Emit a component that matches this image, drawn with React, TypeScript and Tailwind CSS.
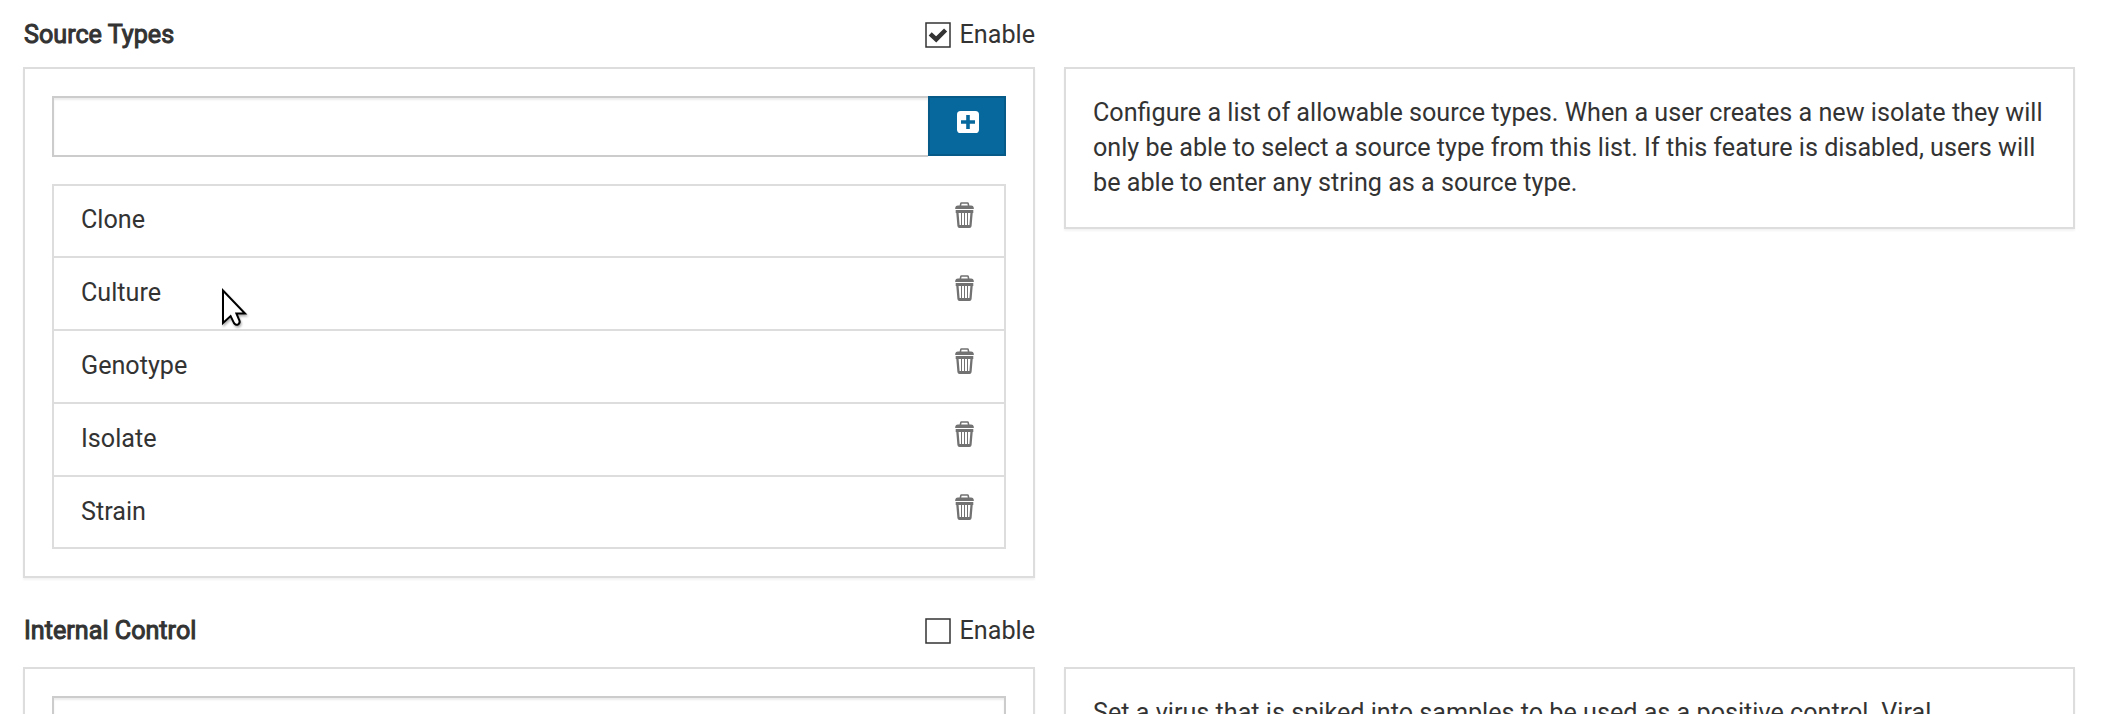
import React from "react";

const sources = [
  { name: "Clone", row: "h-[72px] pt-[16px]" },
  { name: "Culture", row: "h-[73px] pt-[17px]" },
  { name: "Genotype", row: "h-[73px] pt-[17px]" },
  { name: "Isolate", row: "h-[73px] pt-[17px]" },
  { name: "Strain", row: "h-[72px] pt-[17px]" },
];

function TrashIcon() {
  return (
    <svg width="20" height="27" viewBox="0 0 20 27" fill="none">
      <path d="M0.2 7V5.7Q0.5 3.6 2.9 3.5H4.6L5.1 1.3Q5.3 0.2 6.4 0.2H12.6Q13.7 0.2 13.9 1.3L14.4 3.5H16.1Q18.5 3.6 18.8 5.7V7ZM6.2 3.5H12.8L12.4 1.8H6.6Z" fill="#727272" fillRule="evenodd" />
      <path d="M0.7 8H18.3V11H17.7L16.6 24Q16.4 26 14.5 26H4.5Q2.6 26 2.4 24L1.3 11H0.7ZM3.6 11L4.6 23H6V11ZM7 11V23H9V11ZM10 11V23H12V11ZM13 11V23H14.4L15.4 11Z" fill="#727272" fillRule="evenodd" />
    </svg>
  );
}

function PlusIcon() {
  return (
    <svg width="22" height="22" viewBox="0 0 22 22">
      <rect width="22" height="22" rx="3.6" fill="#fff" />
      <path d="M9.2 4h3.6v5.2H18v3.6h-5.2V18H9.2v-5.2H4V9.2h5.2z" fill="#07689d" />
    </svg>
  );
}

function Enable({ checked }: { checked: boolean }) {
  return (
    <div className="flex h-[35px] items-center">
      <svg width="26" height="26" viewBox="0 0 26 26" className="mr-[9px]">
        <rect x="1" y="1" width="24" height="24" fill="#fff" stroke="#333" strokeWidth="1.5" />
        {checked && <path d="M5.2 11.8L11.2 17.4L20.6 8" fill="none" stroke="#333" strokeWidth="4.4" />}
      </svg>
      <span>Enable</span>
    </div>
  );
}

function Header({ title, checked }: { title: string; checked: boolean }) {
  return (
    <div className="flex w-[1012px] justify-between pl-px">
      <h2 className="h-[35px] [-webkit-text-stroke:1px_#333]">{title}</h2>
      <Enable checked={checked} />
    </div>
  );
}

const panel = "border-2 border-[#ddd] bg-white shadow-[0_2px_2px_rgba(0,0,0,0.05)]";

export default function App() {
  return (
    <div className="h-[714px] w-[2104px] overflow-hidden bg-white font-['Roboto',sans-serif] text-[25.17px] leading-[35px] text-[#333]">
      <div className="flex flex-col pl-[23px] pt-[17px]">
        <Header title="Source Types" checked={true} />
        <div className="mt-[15px] flex items-start gap-[29px]">
          <section className={`${panel} h-[511px] w-[1012px] px-[27px] pt-[27px]`}>
            <div className="flex h-[61px] items-start">
              <input className="h-[61px] w-[876px] border-2 border-r-0 border-[#ccc] shadow-[inset_0_2px_2px_rgba(0,0,0,0.075)] outline-none" />
              <button className="flex h-[60px] w-[78px] justify-center border-2 border-[#065a88] bg-[#07689d] pl-[2px] pt-[13px]">
                <PlusIcon />
              </button>
            </div>
            <ul className="mt-[27px] w-[954px] border-x-2 border-b-2 border-[#ddd]">
              {sources.map((s) => (
                <li key={s.name} className={`${s.row} flex justify-between border-t-2 border-[#ddd] pl-[27px] pr-[29px]`}>
                  <span>{s.name}</span>
                  <TrashIcon />
                </li>
              ))}
            </ul>
          </section>
          <section className={`${panel} h-[162px] w-[1011px] px-[27px] pt-[26px]`}>
            Configure a list of allowable source types. When a user creates a new isolate they will only be able to select a source type from this list. If this feature is disabled, users will be able to enter any string as a source type.
          </section>
        </div>
        <div className="mt-[35px]">
          <Header title="Internal Control" checked={false} />
        </div>
        <div className="mt-[19px] flex items-start gap-[29px]">
          <section className={`${panel} h-[120px] w-[1012px] px-[27px] pt-[27px]`}>
            <input className="block h-[61px] w-[954px] border-2 border-[#ccc] shadow-[inset_0_2px_2px_rgba(0,0,0,0.075)] outline-none" />
          </section>
          <section className={`${panel} h-[162px] w-[1011px] px-[27px] pt-[26px]`}>
            Set a virus that is spiked into samples to be used as a positive control. Viral
          </section>
        </div>
      </div>
      <svg width="34" height="46" viewBox="0 0 34 46" className="absolute left-[218px] top-[284px] drop-shadow-[1px_2px_1px_rgba(0,0,0,0.3)]">
        <path d="M5 6.5L5 39L12.6 32.1L16 39.1Q18 41.9 20.5 40.1Q22.5 38.5 21.2 36.1L18.4 29.5H27Z" fill="#fff" stroke="#000" strokeWidth="2" />
      </svg>
    </div>
  );
}
